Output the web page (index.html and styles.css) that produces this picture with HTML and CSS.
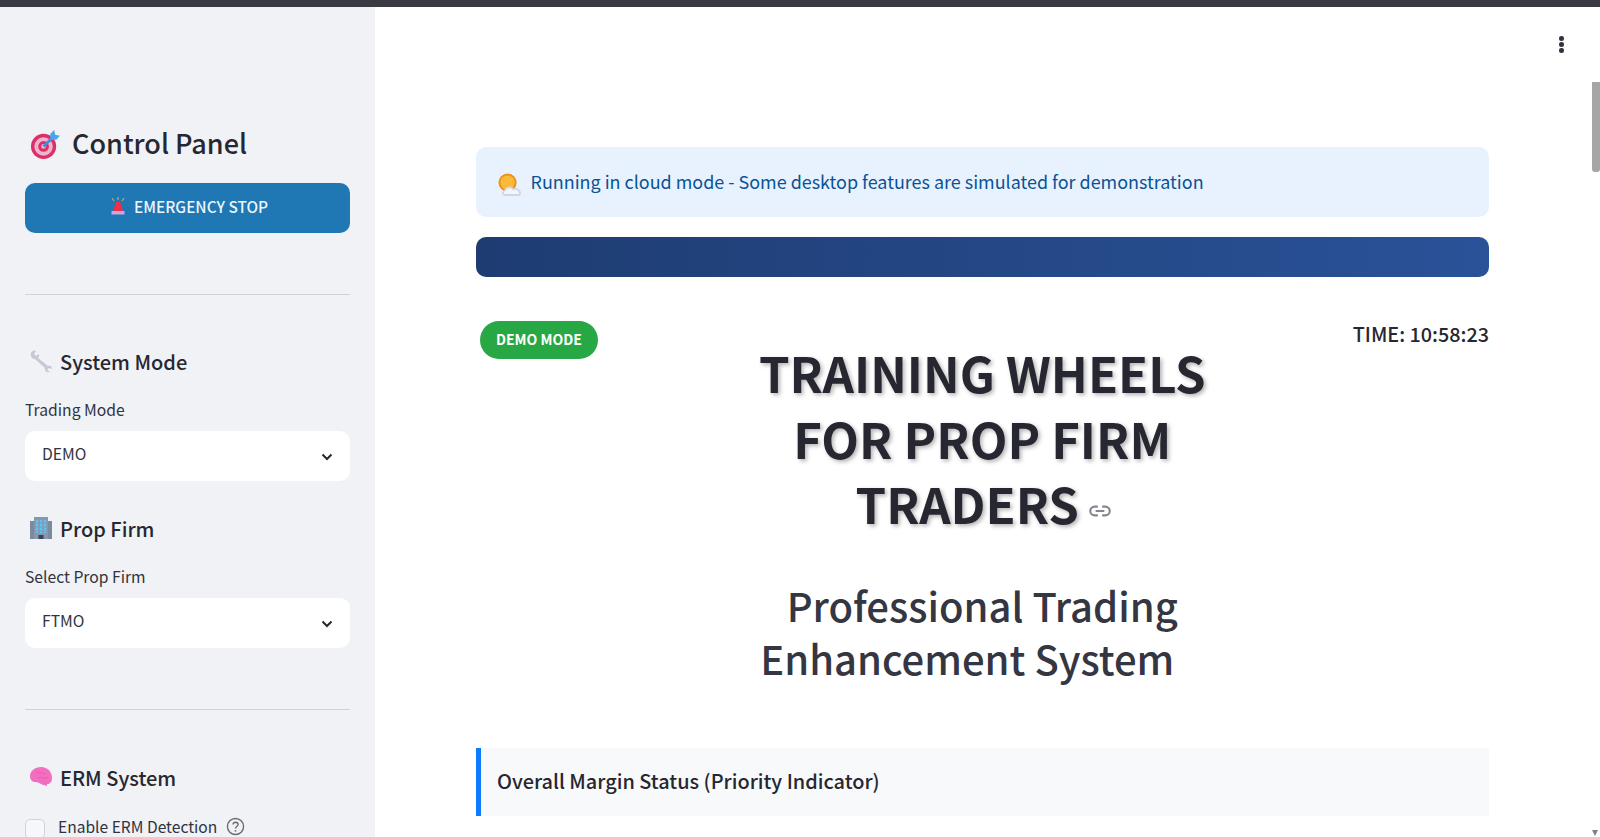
FILE: index.html
```html
<!DOCTYPE html>
<html lang="en">
<head>
    <meta charset="UTF-8">
    <meta name="viewport" content="width=device-width, initial-scale=1.0">
    <title>Training Wheels for Prop Firm Traders</title>
    <link rel="stylesheet" href="styles.css">
</head>
<body>
    <div class="top-bar"></div>
    <div class="app">
        <aside class="sidebar">
            <h2 class="panel-title">
                <svg class="emoji-lg" viewBox="0 0 32 32">
                    <circle cx="14" cy="18" r="13" fill="#dc2f6a"/>
                    <circle cx="14" cy="18" r="9.5" fill="#eeb4cc"/>
                    <circle cx="14" cy="18" r="5.5" fill="#dc2f6a"/>
                    <circle cx="14" cy="18" r="2.5" fill="#eeb4cc"/>
                    <path d="M14 18 L23 9" stroke="#3f8fd8" stroke-width="3"/>
                    <path d="M21 11 L21 5 L25 1 L26 6 L31 7 L27 11 Z" fill="#4aa5ee"/>
                </svg>
                <span class="panel-text">Control Panel</span>
            </h2>
            <button class="stop-button">
                <svg class="emoji-sm" viewBox="0 0 14 18">
                    <path d="M1 1 L3 4 M7 0 V3 M13 1 L11 4" stroke="#c9c65a" stroke-width="1"/>
                    <path d="M5 5 H9 L12 14 H2 Z" fill="#f02f42"/>
                    <rect x="0.500" y="14" width="13" height="3.500" fill="#c9a6ea"/>
                </svg>
                EMERGENCY STOP
            </button>
            <hr class="side-rule rule-one">

            <h3 class="side-heading heading-system">
                <svg class="emoji-md" viewBox="0 0 24 24">
                    <path d="M2 4 C3 2 5 1 7 2 L5 5 L7 7 L10 5 C10.500 7 10 8 9 9 L19 17 C21 16 23 17 23 20 L20 19 L18 21 L21 23 C18 24 15 22 16 19 L6 10 C3 10 1 7 2 4 Z" fill="#c6c9d2"/>
                </svg>
                <span>System Mode</span>
            </h3>
            <label class="field-label">Trading Mode</label>
            <div class="select-box">
                <span>DEMO</span>
                <svg class="chevron" viewBox="0 0 12 8"><path d="M1.5 1.5 L6 6 L10.5 1.5" fill="none" stroke="#262730" stroke-width="2"/></svg>
            </div>

            <h3 class="side-heading heading-firm">
                <svg class="emoji-md" viewBox="0 0 24 24">
                    <rect x="1" y="5" width="5" height="18" fill="#7b8a9e"/>
                    <rect x="18" y="5" width="5" height="18" fill="#7b8a9e"/>
                    <rect x="5" y="1" width="14" height="22" fill="#8798ae"/>
                    <path d="M8 4 V17 M12 4 V17 M16 4 V17" stroke="#5cc4f2" stroke-width="2.400"/>
                    <path d="M6 7 H18 M6 11 H18 M6 15 H18" stroke="#8798ae" stroke-width="1"/>
                    <rect x="9.5" y="19" width="5" height="4" fill="#3b4250"/>
                </svg>
                <span>Prop Firm</span>
            </h3>
            <label class="field-label">Select Prop Firm</label>
            <div class="select-box">
                <span>FTMO</span>
                <svg class="chevron" viewBox="0 0 12 8"><path d="M1.5 1.5 L6 6 L10.5 1.5" fill="none" stroke="#262730" stroke-width="2"/></svg>
            </div>
            <hr class="side-rule rule-two">

            <h3 class="side-heading heading-erm">
                <svg class="emoji-md" viewBox="0 0 24 24">
                    <path d="M1 11 C1 6 6 2 12 2 C19 2 23 7 23 13 C23 17 21 19 18 19 L18 21 L15 20 C12 20 10 17 7 17 C3 17 1 15 1 11 Z" fill="#f26fc0"/>
                    <path d="M7 7 C10 9 13 6 16 9 M9 13 C12 11 15 15 19 12" fill="none" stroke="#e85fb4" stroke-width="1.2"/>
                </svg>
                <span>ERM System</span>
            </h3>
            <div class="check-row">
                <span class="check-box"></span>
                <span class="check-text">Enable ERM Detection</span>
                <svg class="help-icon" viewBox="0 0 20 20">
                    <circle cx="10" cy="10" r="8.5" fill="none" stroke="#6b6d76" stroke-width="1.5"/>
                    <path d="M7.5 8 C7.5 4.8 12.7 4.8 12.7 8 C12.7 10 10 10 10 12" fill="none" stroke="#6b6d76" stroke-width="1.5"/>
                    <circle cx="10" cy="14.6" r="1" fill="#6b6d76"/>
                </svg>
            </div>
        </aside>

        <main class="main-area">
            <div class="toolbar">
                <div class="kebab"><i></i><i></i><i></i></div>
            </div>
            <div class="content">
                <div class="cloud-alert">
                    <svg class="emoji-alert" viewBox="0 0 24 24">
                        <circle cx="10" cy="10" r="9.500" fill="#f0901c"/>
                        <circle cx="10" cy="10" r="7.500" fill="#fbb93a"/>
                        <path d="M8 24 C4 24 3 20 6.500 18 C8 13.500 14 13 16 16 C19 14.500 24 17 24 21 C24 23 23 24 21 24 Z" fill="#d3d6df"/>
                        <path d="M8 22 C5.500 22 5.500 19.500 8 18.500 C9 15.500 14 15 15.500 18 C18 16.500 22 18 22 22 Z" fill="#f4f5f8"/>
                    </svg>
                    <span class="alert-text">Running in cloud mode - Some desktop features are simulated for demonstration</span>
                </div>
                <div class="blue-bar"></div>

                <div class="title-row">
                    <div><span class="mode-badge">DEMO MODE</span></div>
                    <div class="title-col">
                        <h1>TRAINING WHEELS FOR PROP FIRM TRADERS<svg class="link-icon" viewBox="0 0 24 24"><path d="M10 8 H7 A4 4 0 0 0 7 16 H10 M14 8 H17 A4 4 0 0 1 17 16 H14 M8 12 H16" fill="none" stroke="#85878f" stroke-width="2"/></svg></h1>
                        <h2>Professional Trading Enhancement System<span class="anchor-gap"></span></h2>
                    </div>
                    <div class="clock">TIME: 10:58:23</div>
                </div>

                <div class="status-box">Overall Margin Status (Priority Indicator)</div>
            </div>
        </main>

        <div class="scrollbar">
            <div class="scroll-thumb"></div>
            <div class="scroll-down"></div>
        </div>
    </div>
</body>
</html>
```

FILE: styles.css
```css
*{
    box-sizing: border-box;
}
html, body{
    height: 100%;
}
body{
    margin: 0;
    overflow: hidden;
    display: flex;
    flex-direction: column;
    font-family: "Noto Sans CJK SC", "Noto Sans", sans-serif;
    color: rgb(38, 39, 48);
    background-color: white;
}
.top-bar{
    height: 7px;
    flex: none;
    background-color: rgb(58, 59, 66);
}
.app{
    flex: 1;
    min-height: 0;
    display: flex;
}

/* sidebar */
.sidebar{
    width: 375px;
    flex: none;
    overflow: hidden;
    padding: 0 25px;
    background-color: rgb(240, 242, 246);
}
.panel-title{
    display: flex;
    align-items: center;
    gap: 11px;
    height: 40px;
    margin: 117px 0 0;
    padding-left: 5px;
    font-size: 27px;
    font-weight: 500;
}
.panel-text{
    margin-bottom: 4px;
}
.emoji-lg{
    width: 31px;
    height: 31px;
}
.emoji-md{
    width: 24px;
    height: 24px;
}
.emoji-sm{
    width: 14px;
    height: 18px;
}
.stop-button{
    display: flex;
    justify-content: center;
    align-items: center;
    gap: 9px;
    width: 100%;
    height: 50px;
    margin-top: 19px;
    padding: 0 0 4px 4px;
    border: none;
    border-radius: 10px;
    font-family: inherit;
    font-size: 15.4px;
    font-weight: 500;
    color: rgb(235, 245, 252);
    background-color: rgb(31, 119, 180);
}
.side-rule{
    height: 1px;
    margin: 0;
    border: none;
    background-color: rgb(208, 210, 216);
}
.rule-one{
    margin-top: 61px;
}
.rule-two{
    margin-top: 61px;
}
.side-heading{
    display: flex;
    align-items: center;
    gap: 7px;
    height: 32px;
    margin: 0;
    padding-left: 4px;
    font-size: 20px;
    font-weight: 500;
}
.heading-system{
    margin-top: 50px;
}
.heading-firm{
    margin-top: 31px;
}
.heading-erm{
    margin-top: 51px;
}
.field-label{
    display: block;
    margin-top: 21px;
    font-size: 15.7px;
    line-height: 24px;
    color: rgb(49, 51, 63);
}
.select-box{
    display: flex;
    justify-content: space-between;
    align-items: center;
    height: 50px;
    margin-top: 9px;
    padding: 0 17px;
    border-radius: 10px;
    font-size: 15.7px;
    color: rgb(49, 51, 63);
    background-color: white;
}
.select-box span{
    margin-bottom: 5px;
}
.chevron{
    width: 12px;
    height: 8px;
    margin-top: 1px;
}
.check-row{
    display: flex;
    align-items: flex-start;
    margin-top: 26px;
    font-size: 15.6px;
    color: rgb(49, 51, 63);
}
.check-box{
    width: 20px;
    height: 20px;
    margin-right: 13px;
    border: 1px solid rgb(208, 210, 216);
    border-radius: 5px;
    background-color: rgb(246, 247, 250);
}
.check-text{
    line-height: 14px;
}
.help-icon{
    width: 19px;
    height: 19px;
    margin-left: 9px;
    margin-top: -2px;
}

/* main column */
.main-area{
    flex: 1;
    min-width: 0;
}
.toolbar{
    display: flex;
    justify-content: flex-end;
    height: 140px;
    padding: 29px 28.5px 0 0;
}
.kebab{
    display: flex;
    flex-direction: column;
    gap: 1.5px;
}
.kebab i{
    width: 4.5px;
    height: 4.5px;
    border-radius: 50%;
    background-color: rgb(49, 51, 63);
}
.content{
    margin: 0 103px 0 100.5px;
}
.cloud-alert{
    display: flex;
    align-items: center;
    gap: 10px;
    height: 70px;
    padding: 0 22px;
    border-radius: 10px;
    font-size: 17.95px;
    color: rgb(10, 82, 150);
    background-color: rgb(232, 242, 254);
}
.alert-text{
    margin-bottom: 2px;
}
.emoji-alert{
    width: 23px;
    height: 23px;
    margin-top: 4px;
}
.blue-bar{
    height: 40px;
    margin-top: 20px;
    border-radius: 10px;
    background: linear-gradient(90deg, rgb(30, 60, 114), rgb(42, 82, 152));
}
.title-row{
    display: grid;
    grid-template-columns: 1fr 2fr 1fr;
    gap: 16px;
    margin-top: 44px;
}
.mode-badge{
    display: inline-block;
    margin-left: 4.5px;
    padding: 0 16px 1px;
    border-radius: 20px;
    font-size: 14px;
    font-weight: 700;
    line-height: 37px;
    color: white;
    background-color: rgb(40, 167, 69);
}
.title-col{
    text-align: center;
}
.title-col h1{
    margin: 18px 0 0;
    font-size: 49px;
    font-weight: 700;
    line-height: 65.6px;
    color: rgb(38, 39, 48);
    text-shadow: 2px 2px 4px rgba(0, 0, 0, 0.3);
}
.link-icon{
    width: 26px;
    height: 26px;
    margin: 0 -4px 0 8px;
    vertical-align: 0;
}
.title-col h2{
    margin: 43px 0 0;
    font-size: 40px;
    font-weight: 500;
    line-height: 53px;
    color: rgb(52, 54, 66);
}
.anchor-gap{
    display: inline-block;
    width: 30px;
}
.clock{
    text-align: right;
    font-size: 19.8px;
    font-weight: 500;
    line-height: 25px;
}
.status-box{
    display: flex;
    align-items: center;
    height: 68px;
    margin-top: 63px;
    padding: 0 0 2px 16.5px;
    border-left: 5px solid rgb(13, 123, 255);
    font-size: 19.9px;
    font-weight: 500;
    color: rgb(38, 39, 48);
    background-color: rgb(248, 249, 251);
}

/* fake scrollbar */
.scrollbar{
    width: 8px;
    flex: none;
    display: flex;
    flex-direction: column;
    justify-content: space-between;
}
.scroll-thumb{
    height: 90px;
    margin-top: 75px;
    border-radius: 0 0 3px 3px;
    background-color: rgb(165, 167, 167);
}
.scroll-down{
    width: 0;
    height: 0;
    margin: 0 0 1px;
    border-left: 3.5px solid transparent;
    border-right: 3.5px solid transparent;
    border-top: 6px solid rgb(130, 130, 130);
}
```
